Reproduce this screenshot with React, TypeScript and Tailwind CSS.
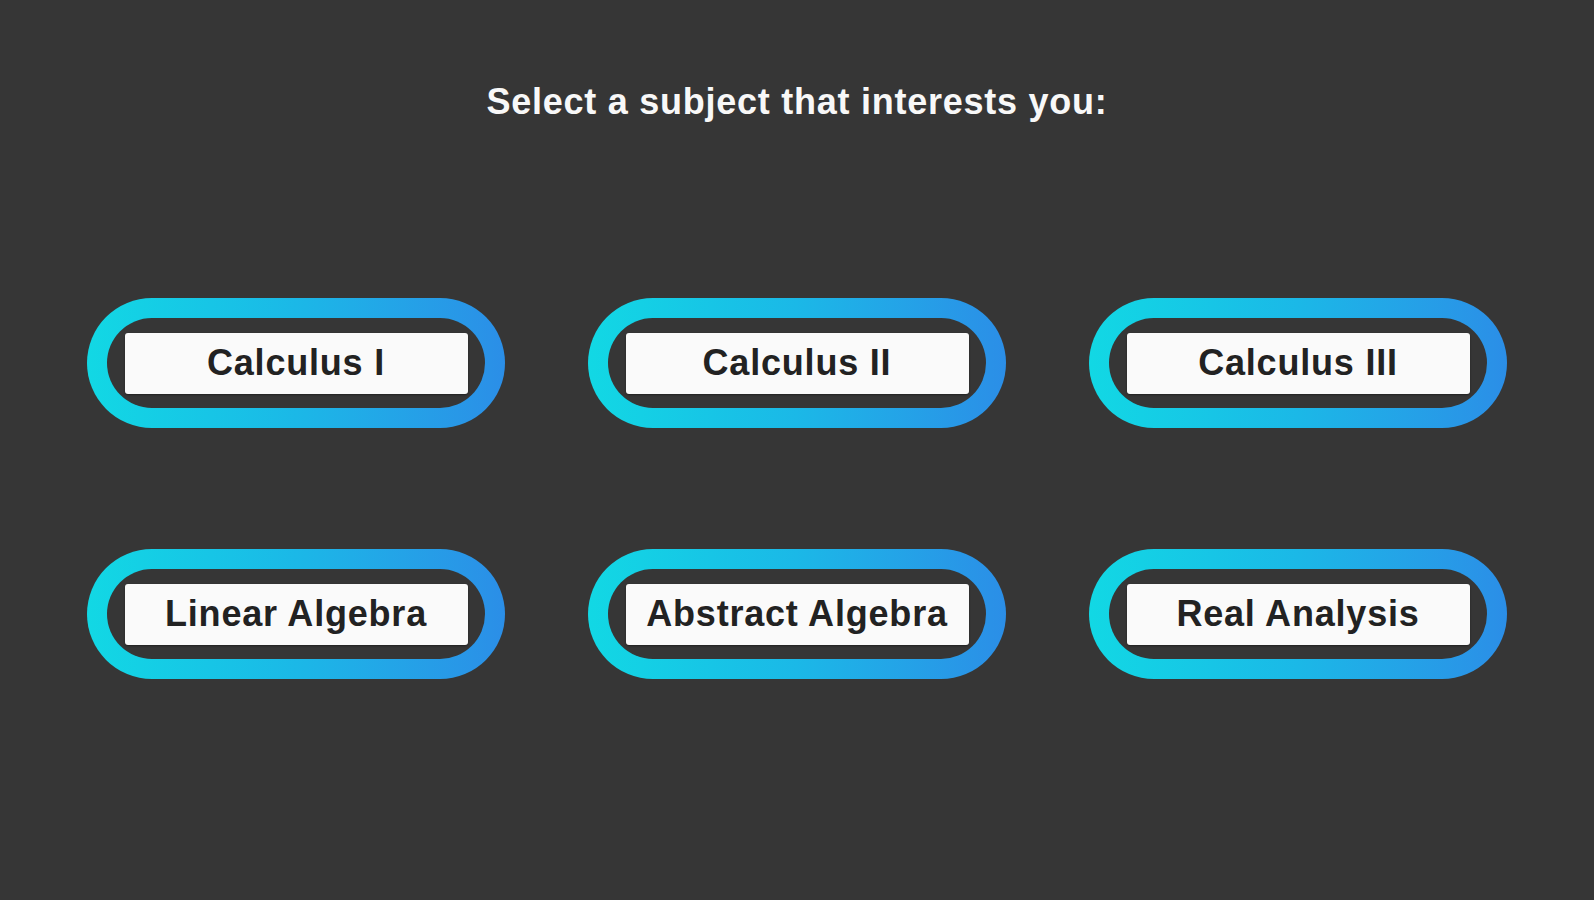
const subjects = [
  'Calculus I',
  'Calculus II',
  'Calculus III',
  'Linear Algebra',
  'Abstract Algebra',
  'Real Analysis',
]

function SubjectButton({ label }: { label: string }) {
  return (
    <div className="w-[418px] h-[130px] rounded-full p-[20px] bg-gradient-to-r from-[#12d8e4] via-[#1bb8e7] to-[#2b8ee7]">
      <div className="w-full h-full rounded-full bg-[#363636] flex items-center justify-center">
        <button
          type="button"
          className="w-[343px] h-[61px] rounded-[3px] bg-[#fafafa] text-[#222222] text-[36px] font-bold leading-none tracking-[0.8px] shadow-[0_1px_2px_rgba(0,0,0,0.4)]"
        >
          {label}
        </button>
      </div>
    </div>
  )
}

export default function App() {
  return (
    <div
      className="w-full h-screen bg-[#363636] flex flex-col items-center"
      style={{ fontFamily: '"Liberation Sans", Arial, sans-serif' }}
    >
      <h1 className="mt-[80px] text-[36px] leading-[44px] font-bold text-[#f8f8f8] tracking-[0.75px]">
        Select a subject that interests you:
      </h1>
      <div className="mt-[174px] grid grid-cols-3 gap-x-[83px] gap-y-[121px]">
        {subjects.map((s) => (
          <SubjectButton key={s} label={s} />
        ))}
      </div>
    </div>
  )
}
